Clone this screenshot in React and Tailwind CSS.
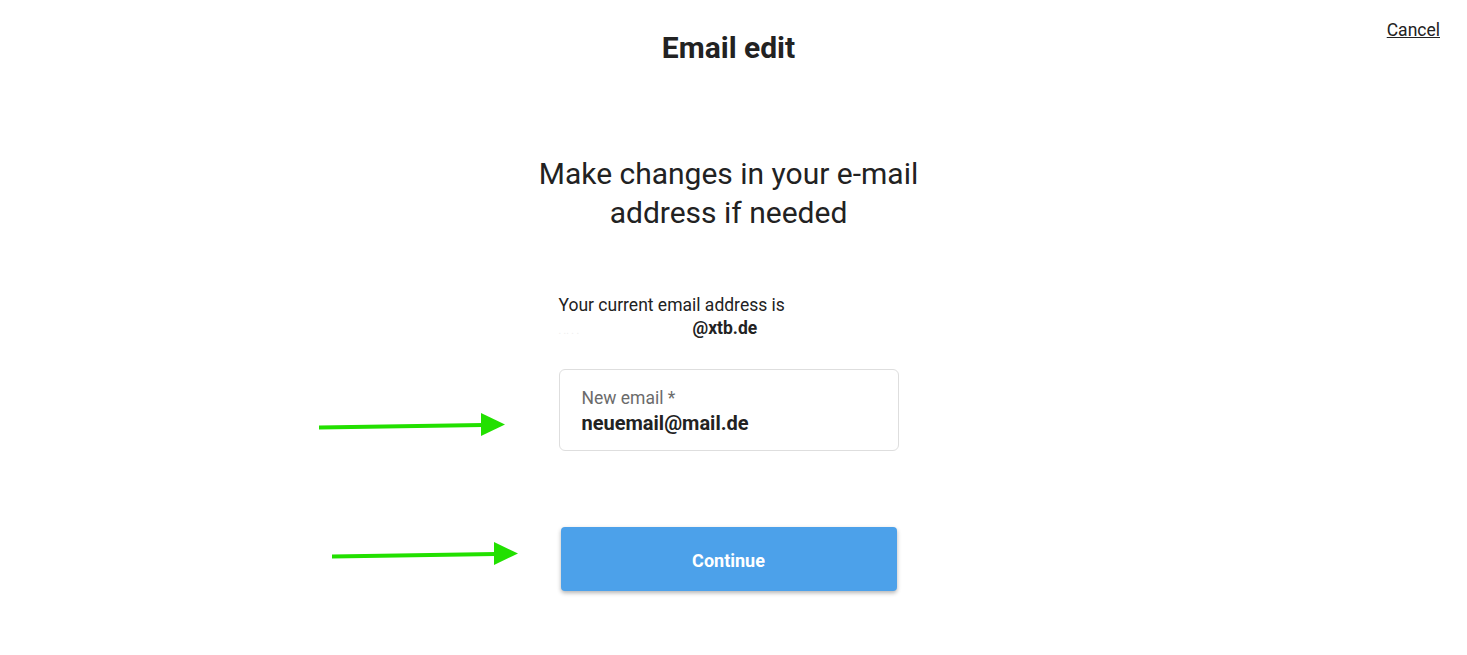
import React from "react";

const Arrow = ({ className }) => (
  <svg className={className} width="190" height="26" viewBox="0 0 190 26" fill="none">
    <path d="M0 15.5 L164 13" stroke="#22e000" strokeWidth="4" />
    <polygon points="162,1 186,12.5 162,24" fill="#22e000" />
  </svg>
);

const App = () => {
  return (
    <div
      className="relative h-[655px] w-full bg-white text-[#222] pr-[10px]"
      style={{ fontFamily: "Roboto, 'Liberation Sans', sans-serif" }}
    >
      {/* Header */}
      <header className="relative flex justify-center pt-[29px]">
        <h1 className="text-[30px] font-bold leading-[38px]">Email edit</h1>
        <a
          href="#"
          className="absolute right-[17px] top-[18px] text-[17.5px] leading-[24px] underline text-[#222]"
        >
          Cancel
        </a>
      </header>

      <main className="flex flex-col items-center">
        <h2 className="mt-[87px] w-[420px] text-center text-[30px] leading-[39px] font-normal">
          Make changes in your e-mail address if needed
        </h2>

        <div className="mt-[62px] w-[340px]">
          <p className="text-[17.5px] leading-[23px]">Your current email address is</p>
          <p className="text-[17.5px] leading-[23px] font-bold">
            <span className="inline-block w-[134px] text-[#eee] font-normal text-[10px]">. .. . .</span>
            @xtb.de
          </p>
        </div>

        <div className="relative mt-[27px] w-[340px] h-[82px] rounded-[6px] border border-[#dedede] px-[22px] pt-[17px]">
          <div className="text-[17.5px] leading-[22px] text-[#6b6b6b]">New email *</div>
          <div className="text-[20px] leading-[28px] font-bold">neuemail@mail.de</div>
          <Arrow className="absolute left-[-241px] top-[42px]" />
        </div>

        <div className="relative mt-[76px]">
          <button className="w-[336px] h-[64px] rounded-[4px] bg-[#4ca1ea] pt-[3px] text-white text-[18px] font-bold shadow-[0_2px_4px_rgba(0,0,0,0.3)]">
            Continue
          </button>
          <Arrow className="absolute left-[-229px] top-[14px]" />
        </div>
      </main>
    </div>
  );
};

export default App;
